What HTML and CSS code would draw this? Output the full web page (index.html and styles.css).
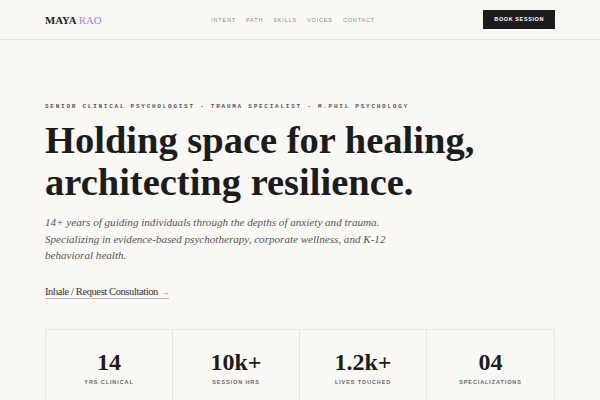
FILE: index.html
```html
<!DOCTYPE html>
<html lang="en">
<head>
    <meta charset="UTF-8">
    <meta name="viewport" content="width=device-width, initial-scale=1.0">
    <title>Maya Rao - Clinical Psychologist</title>
    <link rel="stylesheet" href="styles.css">
</head>
<body>

<!-- top bar -->
<header class="topbar">
    <div class="logo">MAYA <span>RAO</span></div>
    <nav class="nav">
        <a href="#">Intent</a>
        <a href="#">Path</a>
        <a href="#">Skills</a>
        <a href="#">Voices</a>
        <a href="#">Contact</a>
    </nav>
    <a class="book-btn" href="#">Book Session</a>
</header>

<!-- hero -->
<section class="hero">
    <div class="eyebrow">Senior Clinical Psychologist - Trauma Specialist - M.Phil Psychology</div>
    <h1>Holding space for healing, architecting resilience.</h1>
    <p class="intro">14+ years of guiding individuals through the depths of anxiety and trauma. Specializing in evidence-based psychotherapy, corporate wellness, and K-12 behavioral health.</p>
    <a class="cta" href="#">Inhale / Request Consultation <span class="arrow">&rarr;</span></a>
</section>

<!-- stats -->
<section class="stats">
    <div class="stat">
        <div class="num">14</div>
        <div class="label">Yrs Clinical</div>
    </div>
    <div class="stat">
        <div class="num">10k+</div>
        <div class="label">Session Hrs</div>
    </div>
    <div class="stat">
        <div class="num">1.2k+</div>
        <div class="label">Lives Touched</div>
    </div>
    <div class="stat">
        <div class="num">04</div>
        <div class="label">Specializations</div>
    </div>
</section>

</body>
</html>
```

FILE: styles.css
```css
body {
    margin: 0;
    background: #f9f8f5;
    color: #1c1c1c;
    font-family: 'Liberation Serif', serif;
    overflow: hidden;
}

.topbar {
    display: flex;
    align-items: center;
    height: 39px;
    padding: 0 45px;
    border-bottom: 1px solid #e8e6e1;
}

.logo {
    font-size: 10.8px;
    font-weight: bold;
    width: 166px;
}

.logo span {
    color: #a08cd6;
    font-weight: normal;
}

.nav {
    display: flex;
    gap: 10px;
    flex: 1;
}

.nav a {
    font-family: 'Liberation Sans', sans-serif;
    font-size: 5.5px;
    text-transform: uppercase;
    letter-spacing: 0.85px;
    color: #8a8a8a;
    text-decoration: none;
}

.book-btn {
    background: #1c1c1c;
    color: white;
    font-family: 'Liberation Sans', sans-serif;
    font-size: 5.5px;
    font-weight: bold;
    text-transform: uppercase;
    letter-spacing: 0.6px;
    text-decoration: none;
    padding: 6px 11px;
    line-height: 7px;
    margin-top: -1px;
}

.hero {
    padding: 63px 45px 0;
}

.eyebrow {
    font-family: 'Liberation Mono', monospace;
    font-size: 6px;
    font-weight: bold;
    text-transform: uppercase;
    letter-spacing: 1.75px;
    color: #555;
}

h1 {
    font-size: 38.5px;
    line-height: 42px;
    font-weight: bold;
    margin: 9px 0 0;
    max-width: 450px;
}

.intro {
    font-style: italic;
    font-size: 11.1px;
    line-height: 16.5px;
    color: #555;
    max-width: 345px;
    margin: 11px 0 0;
}

.cta {
    display: inline-block;
    margin-top: 22px;
    font-size: 10.5px;
    letter-spacing: -0.4px;
    color: #333;
    text-decoration: none;
    border-bottom: 1px solid #b9b6c8;
    padding-bottom: 1px;
}

.cta .arrow {
    font-size: 8px;
    color: #777;
    letter-spacing: 0;
    margin-left: 1px;
}

.stats {
    display: grid;
    grid-template-columns: repeat(4, 1fr);
    margin: 30px 45px 0;
    border: 1px solid #e8e6e1;
}

.stat {
    text-align: center;
    padding: 19px 0 22px;
    border-right: 1px solid #e8e6e1;
}

.stat:last-child {
    border-right: none;
}

.num {
    font-size: 24px;
    font-weight: bold;
    line-height: 26px;
}

.label {
    font-family: 'Liberation Sans', sans-serif;
    font-size: 5.5px;
    font-weight: bold;
    text-transform: uppercase;
    letter-spacing: 0.9px;
    color: #666;
    margin-top: 4px;
}
```
